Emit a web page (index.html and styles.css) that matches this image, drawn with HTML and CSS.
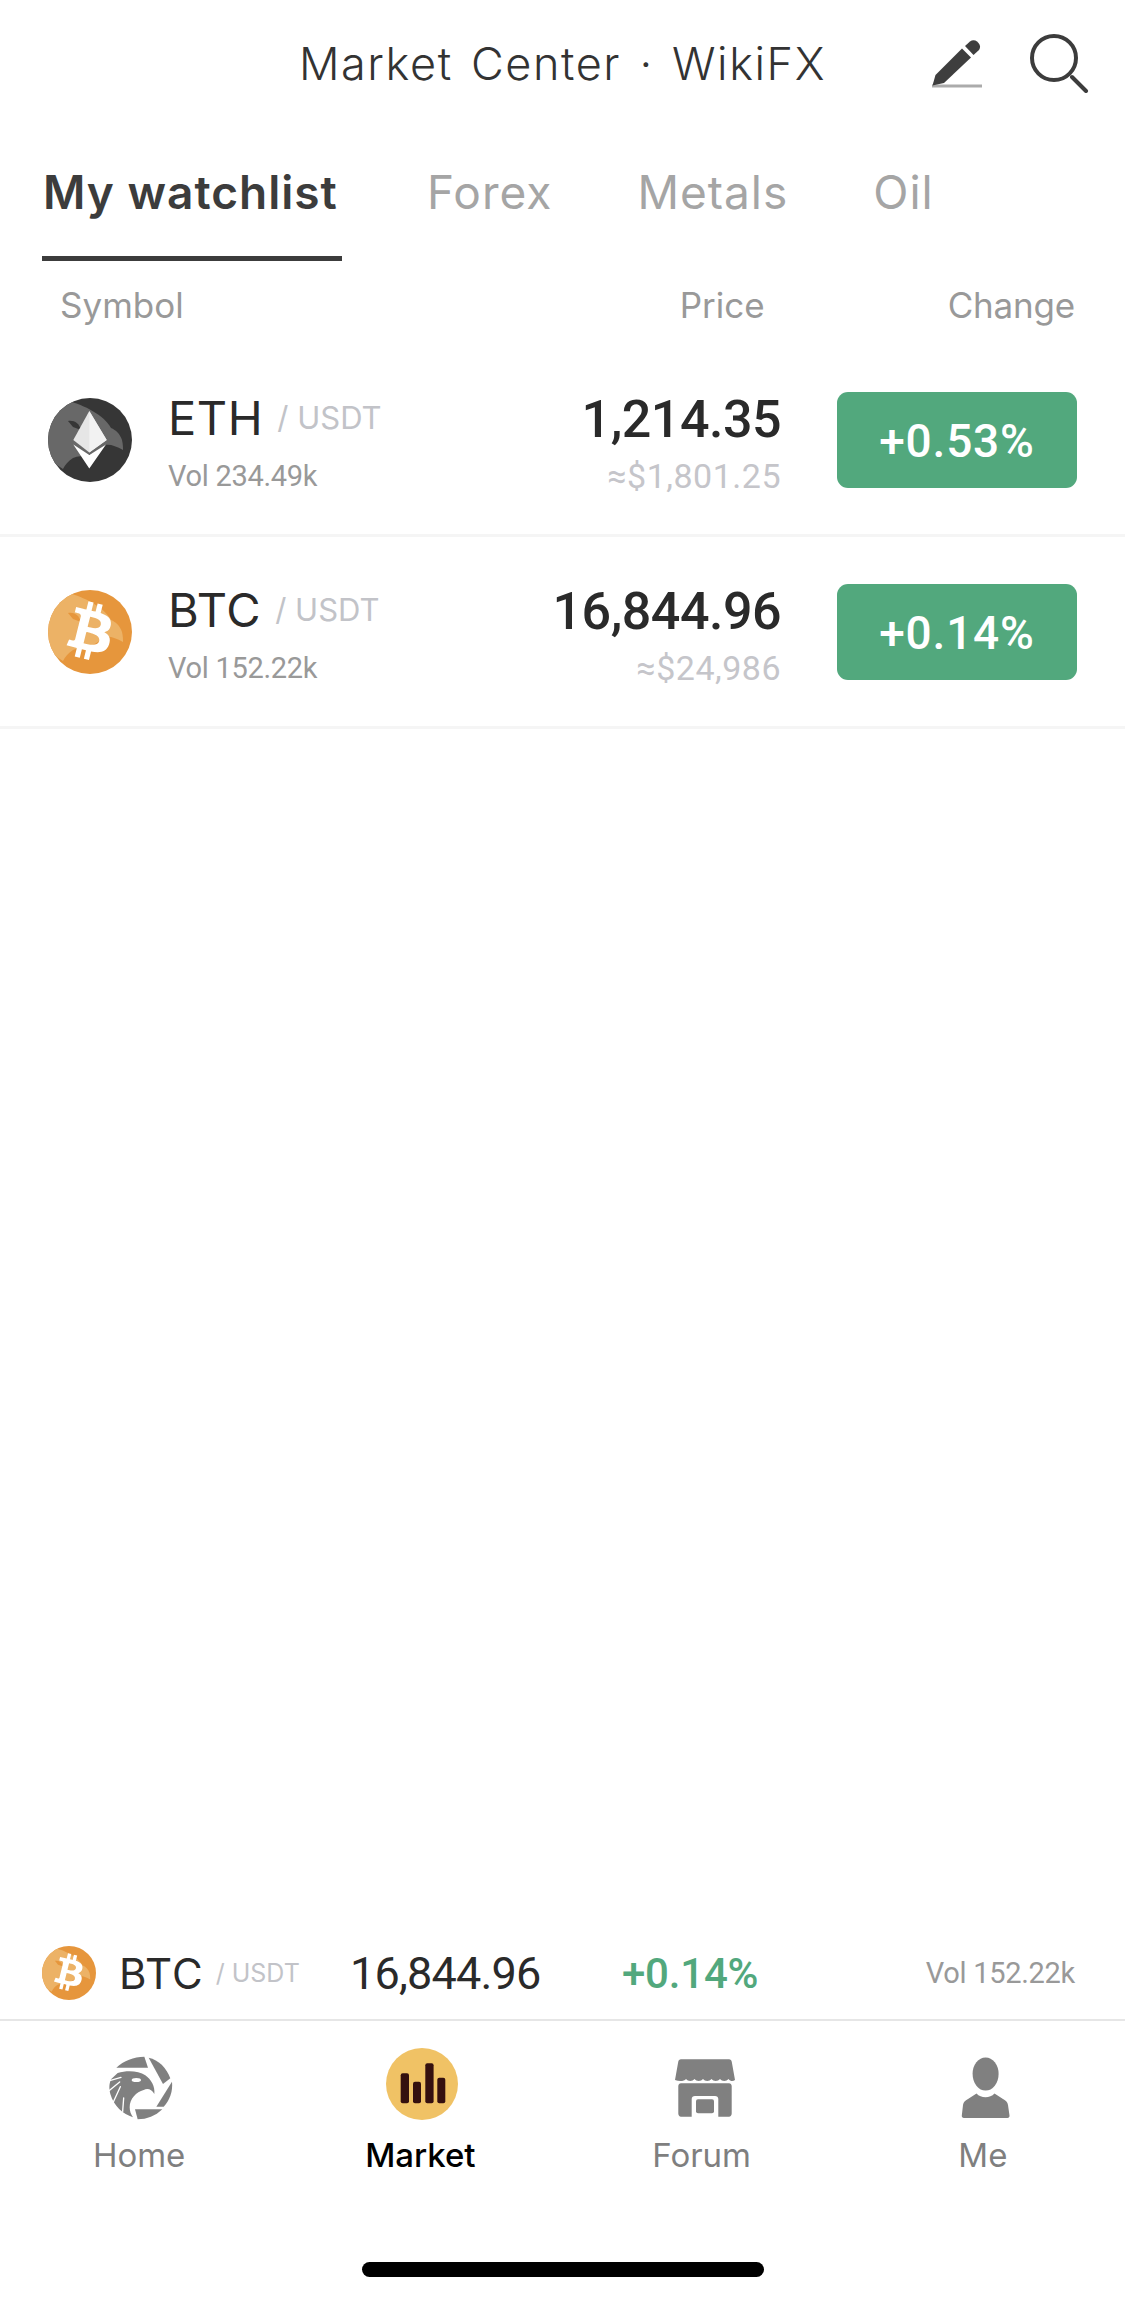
FILE: index.html
```html
<!DOCTYPE html>
<html lang="en">
<head>
<meta charset="utf-8">
<title>Market Center · WikiFX</title>
<link rel="stylesheet" href="styles.css">
</head>
<body>
<svg class="defs" aria-hidden="true">
  <defs>
    <clipPath id="coin-clip"><circle cx="42" cy="42" r="42"/></clipPath>
    <symbol id="coin-btc" viewBox="0 0 84 84">
      <g clip-path="url(#coin-clip)">
        <rect width="84" height="84" fill="#e6963c"/>
        <path d="M20 3C36 7 56 17 63 30C68 32 72 36 74 42C75 46 75 50 75 52C68 48 62 46 57 47C50 52 46 55 40 57C34 58 30 58 25 60C20 63 17 67 15 71L-2 60V10Z" fill="#ecb266"/>
        <path d="M20 23C26 22 31 25 33 32L25 29Z" fill="#e6963c"/>
      </g>
      <path transform="translate(-4 -5) scale(1.45)" fill="#fff" d="M46.103 27.444c.637-4.258-2.605-6.547-7.038-8.074l1.438-5.768-3.511-.875-1.4 5.616c-.923-.23-1.871-.447-2.813-.662l1.41-5.653-3.509-.875-1.439 5.766c-.764-.174-1.514-.346-2.242-.527l.004-.018-4.842-1.209-.934 3.75s2.605.597 2.55.634c1.422.355 1.679 1.296 1.636 2.042l-1.638 6.571c.098.025.225.061.365.117l-.371-.092-2.296 9.205c-.174.432-.615 1.08-1.609.834.035.051-2.552-.637-2.552-.637l-1.743 4.019 4.569 1.139c.85.213 1.683.436 2.503.646l-1.453 5.834 3.507.875 1.439-5.772c.958.26 1.888.5 2.798.726l-1.434 5.745 3.511.875 1.453-5.823c5.987 1.133 10.489.676 12.384-4.739 1.527-4.36-.076-6.875-3.226-8.515 2.294-.529 4.022-2.038 4.483-5.155zm-8.022 11.249c-1.085 4.36-8.426 2.003-10.806 1.412l1.928-7.729c2.38.594 10.012 1.77 8.878 6.317zm1.086-11.312c-.99 3.966-7.1 1.951-9.082 1.457l1.748-7.01c1.982.494 8.365 1.416 7.334 5.553z"/>
    </symbol>
    <symbol id="coin-eth" viewBox="0 0 84 84">
      <g clip-path="url(#coin-clip)">
        <rect width="84" height="84" fill="#363636"/>
        <path d="M20 3C36 7 56 17 63 30C68 32 72 36 74 42C75 46 75 50 75 52C68 48 62 46 57 47C50 52 46 55 40 57C34 58 30 58 25 60C20 63 17 67 15 71L-2 60V10Z" fill="#686868"/>
        <path d="M20 23C26 22 31 25 33 32L25 29Z" fill="#363636"/>
      </g>
      <path d="M41.3 13L58.7 42L41.3 54.5L25.3 42Z" fill="#e6e6e6"/>
      <path d="M41.3 13L58.7 42L41.3 54.5Z" fill="#f2f2f2"/>
      <path d="M25.3 46.5L41.3 57L58 46.5L41.3 70.5Z" fill="#fff"/>
    </symbol>
  </defs>
</svg>

<main class="app">
  <header class="topbar">
    <span></span>
    <h1 class="topbar-title">Market Center · WikiFX</h1>
    <div class="topbar-actions">
      <svg class="icon-pen" viewBox="0 0 56 56" aria-hidden="true">
        <path d="M1 48H51" stroke="#ababab" stroke-width="3"/>
        <path d="M1.500 47.500L4.500 37L31 10.500L40 19.500L13 45Z" fill="#3e3e3e"/>
        <path d="M34 8L39 3.500C41 1.800 44 1.800 46 3.500L47.500 5C49.500 7 49.500 10 48 12L42.500 17Z" fill="#3e3e3e"/>
      </svg>
      <svg class="icon-search" viewBox="0 0 60 60" aria-hidden="true">
        <circle cx="25" cy="25" r="22" fill="none" stroke="#3c3c3c" stroke-width="4"/>
        <path d="M43 44L57 58" stroke="#3c3c3c" stroke-width="4" stroke-linecap="round"/>
      </svg>
    </div>
  </header>

  <nav class="tabs">
    <a class="tab tab-active">My watchlist</a>
    <a class="tab">Forex</a>
    <a class="tab">Metals</a>
    <a class="tab">Oil</a>
  </nav>

  <div class="table-head">
    <span class="head-symbol">Symbol</span>
    <span class="head-price">Price</span>
    <span class="head-change">Change</span>
  </div>

  <section class="quotes">
    <article class="quote">
      <svg class="coin"><use href="#coin-eth"/></svg>
      <div class="quote-symbol">
        <div class="pair"><span class="pair-base">ETH</span><span class="pair-quote">/ USDT</span></div>
        <div class="volume">Vol 234.49k</div>
      </div>
      <div class="quote-price">
        <div class="price">1,214.35</div>
        <div class="fiat">≈$1,801.25</div>
      </div>
      <div class="badge">+0.53%</div>
    </article>
    <article class="quote">
      <svg class="coin"><use href="#coin-btc"/></svg>
      <div class="quote-symbol">
        <div class="pair"><span class="pair-base">BTC</span><span class="pair-quote">/ USDT</span></div>
        <div class="volume">Vol 152.22k</div>
      </div>
      <div class="quote-price">
        <div class="price">16,844.96</div>
        <div class="fiat">≈$24,986</div>
      </div>
      <div class="badge">+0.14%</div>
    </article>
  </section>

  <div class="spacer"></div>

  <section class="ticker">
    <div class="ticker-symbol">
      <svg class="ticker-coin"><use href="#coin-btc"/></svg>
      <span class="ticker-base">BTC</span><span class="ticker-quote">/ USDT</span>
    </div>
    <div class="ticker-price">16,844.96</div>
    <div class="ticker-change">+0.14%</div>
    <div class="ticker-volume">Vol 152.22k</div>
  </section>

  <nav class="tabbar">
    <a class="tabbar-item">
      <svg class="tabbar-icon" viewBox="74 54 216 216" aria-hidden="true">
        <g fill="#808080">
          <path d="M108 113C130 92 160 80 192 80L203 113Z"/>
          <path d="M205 83C235 90 258 112 270 145L248 162Z"/>
          <path d="M275 155C278 185 268 210 250 230L228 230Z"/>
          <path d="M246 238C225 258 200 268 172 268L164 238Z"/>
          <path d="M112 129C140 120 175 122 195 136C212 148 225 170 222 192C214 178 202 174 190 180C168 186 148 206 148 232C148 244 152 254 158 262C128 252 100 228 90 192C85 174 87 160 92 148Z"/>
        </g>
        <g fill="none" stroke="#fff" stroke-width="4" stroke-linecap="round">
          <path d="M88 152L122 142"/>
          <path d="M86 182L118 156"/>
          <path d="M98 218L120 170"/>
          <path d="M127 244L130 204"/>
        </g>
        <ellipse cx="168" cy="150" rx="14" ry="6" fill="#fff"/>
      </svg>
      <span class="tabbar-label">Home</span>
    </a>
    <a class="tabbar-item tabbar-item-active">
      <svg class="tabbar-icon" viewBox="0 0 72 72" aria-hidden="true">
        <circle cx="36" cy="36" r="36" fill="#f0c265"/>
        <g fill="#35100f">
          <rect x="14.700" y="25.300" width="8.300" height="30" rx="2"/>
          <rect x="27" y="33.700" width="8" height="21.600" rx="2"/>
          <rect x="39.300" y="15.300" width="8.300" height="40" rx="2"/>
          <rect x="51.300" y="29.700" width="8" height="25.600" rx="2"/>
        </g>
      </svg>
      <span class="tabbar-label">Market</span>
    </a>
    <a class="tabbar-item">
      <svg class="tabbar-icon" viewBox="0 0 72 72" aria-hidden="true">
        <path fill="#808080" d="M14 11.300H62C63.500 11.300 64.500 12.300 64.800 14L68 32C66 33.500 63.500 33.500 61.500 31C59.500 33.500 55 33.500 53 31C51 33.500 46.500 33.500 44.500 31C42.500 33.500 38 33.500 36 31C34 33.500 29.500 33.500 27.500 31C25.500 33.500 21 33.500 19 31C17 33.500 12 33.500 8 32L11.200 14C11.500 12.300 12.500 11.300 14 11.300Z"/>
        <path fill="#808080" fill-rule="evenodd" d="M14 35.300H62C63.500 35.300 64.700 36.500 64.700 38V65.500C64.700 67.300 63.500 68.700 62 68.700H14C12.500 68.700 11.300 67.300 11.300 65.500V38C11.300 36.500 12.500 35.300 14 35.300ZM28 48C26 48 24.700 49.300 24.700 51V68.700H51.300V51C51.300 49.300 50 48 48 48Z"/>
        <rect x="29" y="51.300" width="18" height="14" rx="2" fill="#808080"/>
      </svg>
      <span class="tabbar-label">Forum</span>
    </a>
    <a class="tabbar-item">
      <svg class="tabbar-icon" viewBox="0 0 72 72" aria-hidden="true">
        <ellipse cx="37.600" cy="26" rx="13" ry="16.500" fill="#808080"/>
        <path fill="#808080" d="M16 70C14.500 70 13.600 69 13.800 67.500L15 57C15.500 54 17 52.500 20 51L28.500 45.500C33 50.500 42 50.500 46.500 45.500L55 51C58 52.500 59.500 54 60 57L61.500 67.500C61.700 69 60.800 70 59.500 70Z"/>
      </svg>
      <span class="tabbar-label">Me</span>
    </a>
  </nav>

  <div class="home-indicator"></div>
</main>
</body>
</html>
```

FILE: styles.css
```css
* {
  box-sizing: border-box;
}

html,
body {
  margin: 0;
  padding: 0;
  background: #fff;
}

body {
  font-family: Inter, "Liberation Sans", Arial, sans-serif;
}

/* Shared symbols only; takes no room in the page */
.defs {
  position: absolute;
  width: 0;
  height: 0;
}

.app {
  width: 1125px;
  height: 2300px;
  display: flex;
  flex-direction: column;
  overflow: hidden;
}

/* Top bar */
.topbar {
  height: 126px;
  display: grid;
  grid-template-columns: 1fr auto 1fr;
  align-items: start;
}

.topbar-title {
  margin: 36px 0 0;
  font-size: 45px;
  line-height: 55px;
  font-weight: 300;
  color: #333;
  letter-spacing: 1.6px;
  word-spacing: 4px;
}

.topbar-actions {
  display: flex;
  justify-content: flex-end;
  padding: 33px 36px 0 0;
  gap: 42px;
}

.icon-pen {
  width: 56px;
  height: 56px;
  margin-top: 5px;
}

.icon-search {
  width: 60px;
  height: 60px;
}

/* Category tabs */
.tabs {
  height: 135px;
  display: flex;
  gap: 85px;
  padding-left: 42px;
}

.tab {
  font-size: 46px;
  line-height: 54px;
  letter-spacing: 1px;
  padding-top: 39px;
  color: #a5a5a5;
}

.tab-active {
  width: 300px;
  font-weight: 600;
  color: #3c3c3c;
  padding-left: 1px;
  border-bottom: 5px solid #3c3c3c;
}

/* Column headings */
.table-head {
  height: 84px;
  display: flex;
  padding: 23px 50px 0 60px;
  font-size: 35px;
  line-height: 42px;
  color: #999;
}

.head-symbol {
  flex: 1;
}

.head-change {
  margin-left: 183px;
  letter-spacing: -0.2px;
}

/* Quote rows */
.quote {
  height: 192px;
  display: flex;
  align-items: center;
  padding: 0 48px;
  border-bottom: 3px solid #f5f5f5;
}

.coin {
  width: 84px;
  height: 84px;
  flex: none;
}

.quote-symbol {
  flex: 1;
  margin: 6px 0 0 36px;
}

.pair {
  display: flex;
  align-items: baseline;
  height: 52px;
}

.pair-base {
  font-size: 47px;
  line-height: 52px;
  letter-spacing: 0.6px;
  color: #2a2a2a;
}

.pair-quote {
  margin-left: 14px;
  font-size: 31px;
  color: #c2c3c8;
  position: relative;
  top: -6px;
}

.volume {
  font-family: Roboto, sans-serif;
  font-size: 29px;
  line-height: 36px;
  letter-spacing: -0.3px;
  margin-top: 14px;
  color: #999;
}

.quote-price {
  text-align: right;
  font-family: Roboto, sans-serif;
  margin: 6px 56px 0 0;
}

.price {
  font-size: 52px;
  line-height: 60px;
  font-weight: 500;
  letter-spacing: -0.5px;
  color: #2a2a2a;
}

.fiat {
  font-size: 34px;
  line-height: 40px;
  letter-spacing: 0.5px;
  margin-top: 6px;
  color: #c5c5ca;
}

.badge {
  width: 240px;
  height: 96px;
  padding-top: 2px;
  border-radius: 11px;
  background: #52a87d;
  color: #fff;
  font-family: Roboto, sans-serif;
  font-size: 46px;
  font-weight: 500;
  letter-spacing: 0.8px;
  display: flex;
  align-items: center;
  justify-content: center;
}

.spacer {
  flex: 1;
}

/* Pinned ticker */
.ticker {
  height: 80px;
  display: flex;
  align-items: center;
  padding: 0 50px 14px 42px;
  border-bottom: 2px solid #e6e6e6;
}

.ticker-symbol {
  width: 308px;
  display: flex;
  align-items: center;
}

.ticker-coin {
  width: 54px;
  height: 54px;
  margin-right: 23px;
}

.ticker-base {
  font-size: 42px;
  letter-spacing: 1px;
  color: #2a2a2a;
}

.ticker-quote {
  margin-left: 12px;
  font-size: 25px;
  color: #c2c3c8;
}

.ticker-price {
  width: 272px;
  font-family: Roboto, sans-serif;
  font-size: 45px;
  letter-spacing: -0.8px;
  color: #2a2a2a;
}

.ticker-change {
  font-family: Roboto, sans-serif;
  font-size: 42px;
  font-weight: 500;
  letter-spacing: -0.2px;
  color: #52a87d;
}

.ticker-volume {
  margin-left: auto;
  font-family: Roboto, sans-serif;
  font-size: 29px;
  letter-spacing: -0.3px;
  color: #999;
}

/* Bottom navigation */
.tabbar {
  height: 241px;
  display: grid;
  grid-template-columns: repeat(4, 1fr);
  padding-top: 27px;
  align-items: start;
}

.tabbar-item {
  display: flex;
  flex-direction: column;
  align-items: center;
}

.tabbar-icon {
  width: 72px;
  height: 72px;
}

.tabbar-label {
  margin: 16px 3px 0 0;
  font-size: 33px;
  line-height: 38px;
  color: #7f7f7f;
}

.tabbar-item-active .tabbar-label {
  color: #000;
  font-weight: 500;
}

/* Home indicator */
.home-indicator {
  flex: none;
  width: 402px;
  height: 15px;
  margin: 0 auto 23px;
  border-radius: 8px;
  background: #000;
}
```
